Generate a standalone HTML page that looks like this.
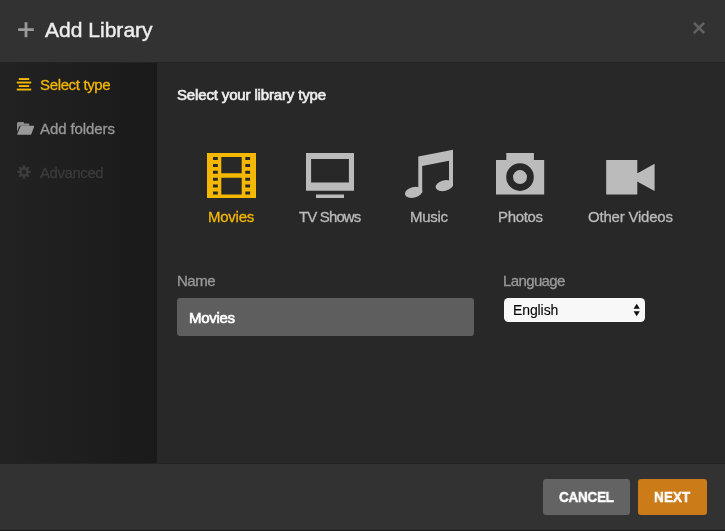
<!DOCTYPE html>
<html><head><meta charset="utf-8">
<style>
html,body{margin:0;padding:0;}
body{width:725px;height:531px;overflow:hidden;background:#282828;font-family:"Liberation Sans",sans-serif;position:relative;color:#bbb;}
.abs{position:absolute;}
#hdr{left:0;top:0;width:725px;height:62px;background:#323232;border-bottom:1px solid #232323;}
#side{left:0;top:63px;width:157px;height:400px;background:linear-gradient(to right,#222222,#1a1a1a);}
#main{left:157px;top:63px;width:568px;height:400px;background:#282828;}
#ftr{left:0;top:463px;width:725px;height:67px;background:#323232;border-top:1px solid #222;box-sizing:border-box;}
#bot{left:0;top:529px;width:725px;height:2px;background:linear-gradient(to bottom,#2f2f2f 0,#2f2f2f 50%,#181a1b 50%,#181a1b 100%);}
.t{position:absolute;white-space:nowrap;line-height:1;font-size:15px;will-change:transform;-webkit-text-stroke:0.3px;}
.y{color:#f5b800;}
.g{color:#999;}
.d{color:#3b3b3b;}
.w{color:#eee;}
svg{position:absolute;overflow:visible;}
.btn{position:absolute;top:479px;height:36px;border-radius:3px;}
</style></head><body>
<div id="hdr" class="abs"></div>
<div id="side" class="abs"></div>
<div id="main" class="abs"></div>
<div id="ftr" class="abs"></div>
<div id="bot" class="abs"></div>

<!-- header -->
<svg style="left:0;top:0" width="60" height="62"><path d="M24.6 22.2h2.8v6.1h6.4v2.8h-6.4v6.2h-2.8v-6.2h-6.5v-2.8h6.5z" fill="#9a9a9a"/></svg>
<span class="t w" id="title" style="left:45px;top:19px;font-size:21px;letter-spacing:0.02px;-webkit-text-stroke:0.45px;">Add Library</span>
<span class="t" id="close" style="left:692px;top:15.5px;font-size:24px;font-weight:700;color:#626262;-webkit-text-stroke:0;">×</span>

<!-- sidebar -->
<svg style="left:0;top:63px" width="157" height="140">
 <g fill="#f5b800">
  <rect x="18.8" y="15.1" width="10.4" height="1.9"/>
  <rect x="16.8" y="18.6" width="14.4" height="1.9"/>
  <rect x="18.8" y="22.1" width="10.4" height="1.9"/>
  <rect x="16.8" y="25.6" width="14.4" height="1.9"/>
 </g>
 <g fill="#999">
  <path fill="#8e8e8e" d="M17 60.4 q0 -1.5 1.5 -1.5 h4.3 q1.3 0 1.3 1.3 v0.3 h4 q1.3 0 1.3 1.3 v0.9 h-8.6 q-1.3 0 -1.9 1.2 l-1.9 5.2z"/>
  <path d="M20.3 63.8 q0.5 -1 1.6 -1 h11.8 q0.8 0 0.4 0.9 l-2.7 7.2 q-0.4 0.9 -1.5 0.9 h-12.1 q-0.9 0 -0.5 -0.9z"/>
 </g>
 <g fill="#3c3c3c" transform="translate(24 108.9)">
  <path fill-rule="evenodd" d="M-1.19 -4.75L-0.96 -6.83L0.96 -6.83L1.19 -4.75L2.52 -4.20L4.15 -5.51L5.51 -4.15L4.20 -2.52L4.75 -1.19L6.83 -0.96L6.83 0.96L4.75 1.19L4.20 2.52L5.51 4.15L4.15 5.51L2.52 4.20L1.19 4.75L0.96 6.83L-0.96 6.83L-1.19 4.75L-2.52 4.20L-4.15 5.51L-5.51 4.15L-4.20 2.52L-4.75 1.19L-6.83 0.96L-6.83 -0.96L-4.75 -1.19L-4.20 -2.52L-5.51 -4.15L-4.15 -5.51L-2.52 -4.20zM0 -2.2a2.2 2.2 0 1 0 0 4.4a2.2 2.2 0 1 0 0 -4.4z"/>
 </g>
</svg>
<span class="t y" id="s1" style="left:40px;top:77px;letter-spacing:-0.35px;">Select type</span>
<span class="t g" id="s2" style="left:40px;top:121px;letter-spacing:-0.1px;">Add folders</span>
<span class="t d" id="s3" style="left:40px;top:165px;letter-spacing:-0.44px;">Advanced</span>

<!-- main -->
<span class="t w" id="h2" style="left:177px;top:87px;letter-spacing:-0.15px;-webkit-text-stroke:0.65px;">Select your library type</span>

<svg style="left:0;top:0" width="725" height="260">
 <!-- film -->
 <path fill="#f5b800" fill-rule="evenodd" d="M207 153h49v45h-49z
  M213 157h4.8v3h-4.8z M213 163.9h4.8v3h-4.8z M213 170.8h4.8v3h-4.8z M213 177.7h4.8v3h-4.8z M213 184.6h4.8v3h-4.8z M213 191.4h4.8v3h-4.8z
  M245.3 157h4.8v3h-4.8z M245.3 163.9h4.8v3h-4.8z M245.3 170.8h4.8v3h-4.8z M245.3 177.7h4.8v3h-4.8z M245.3 184.6h4.8v3h-4.8z M245.3 191.4h4.8v3h-4.8z
  M221.3 157h20.4v16.3h-20.4z M221.3 177.7h20.4v16.7h-20.4z"/>
 <!-- tv -->
 <path fill="#bbb" fill-rule="evenodd" d="M306 153h48v37.8h-48z M311.1 158.9h37.8v23.5h-37.8z M316 194.4h28v3.5h-28z"/>
 <!-- music -->
 <g fill="#bbb">
  <path d="M418.3 156.4L453 149.7V186h-4V160.7L422.2 166V193h-3.9z"/>
  <ellipse cx="413.6" cy="192.3" rx="8.9" ry="5.3" transform="rotate(-14 413.6 192.3)"/>
  <ellipse cx="444.4" cy="185.6" rx="8.9" ry="5.3" transform="rotate(-14 444.4 185.6)"/>
 </g>
 <!-- camera -->
 <path fill="#bbb" fill-rule="evenodd" d="M496 159.9h10.3v-6.8h27.6v6.8h10.3v34.7h-48.2z M520 163.3a13.8 13.8 0 1 0 0 27.6a13.8 13.8 0 1 0 0-27.6z"/>
 <circle cx="520" cy="177.1" r="7" fill="#bbb"/>
 <!-- video -->
 <path fill="#bbb" d="M606.2 159.9h31.1v13.4l17.3-9.5v27.2l-17.3-9.5v13.1h-31.1z"/>
</svg>
<span class="t y" id="l1" style="left:208px;top:209px;letter-spacing:-0.25px;">Movies</span>
<span class="t" id="l2" style="left:299.3px;top:209px;letter-spacing:-0.86px;">TV Shows</span>
<span class="t" id="l3" style="left:409.6px;top:209px;letter-spacing:-0.31px;">Music</span>
<span class="t" id="l4" style="left:497.6px;top:209px;letter-spacing:-0.32px;">Photos</span>
<span class="t" id="l5" style="left:588.2px;top:209px;letter-spacing:-0.21px;">Other Videos</span>

<span class="t g" id="n1" style="left:176.6px;top:273px;letter-spacing:-0.5px;">Name</span>
<div class="abs" style="left:177px;top:298px;width:297px;height:38px;background:#5e5e5e;border-radius:3px;"></div>
<span class="t" id="n2" style="left:189.4px;top:310px;color:#fff;letter-spacing:-0.3px;-webkit-text-stroke:0.65px;">Movies</span>

<span class="t g" id="n3" style="left:503.4px;top:273px;letter-spacing:-0.62px;">Language</span>
<div class="abs" style="left:504.3px;top:298.3px;width:140.5px;height:23.3px;background:#f8f8f8;border-radius:4.5px;"></div>
<span class="t" id="n4" style="left:513px;top:303px;font-size:14px;color:#000;letter-spacing:-0.1px;-webkit-text-stroke:0.1px;">English</span>
<svg style="left:630px;top:298px" width="15" height="24"><path d="M3.6 10.7l3.1-5 3.1 5z M3.6 13.2l3.1 5 3.1-5z" fill="#111"/></svg>

<!-- footer -->
<div class="btn" style="left:543px;width:87px;background:#636363;"></div>
<div class="btn" style="left:638px;width:69px;background:#cc7b19;"></div>
<span class="t" id="b1" style="left:559.1px;top:488.5px;font-weight:700;color:#fff;letter-spacing:-0.3px;transform:scaleX(0.9);transform-origin:0 0;-webkit-text-stroke:0.45px;">CANCEL</span>
<span class="t" id="b2" style="left:654.2px;top:488.5px;font-weight:700;color:#fff;letter-spacing:0.05px;transform:scaleX(0.9);transform-origin:0 0;-webkit-text-stroke:0.45px;">NEXT</span>
</body></html>
